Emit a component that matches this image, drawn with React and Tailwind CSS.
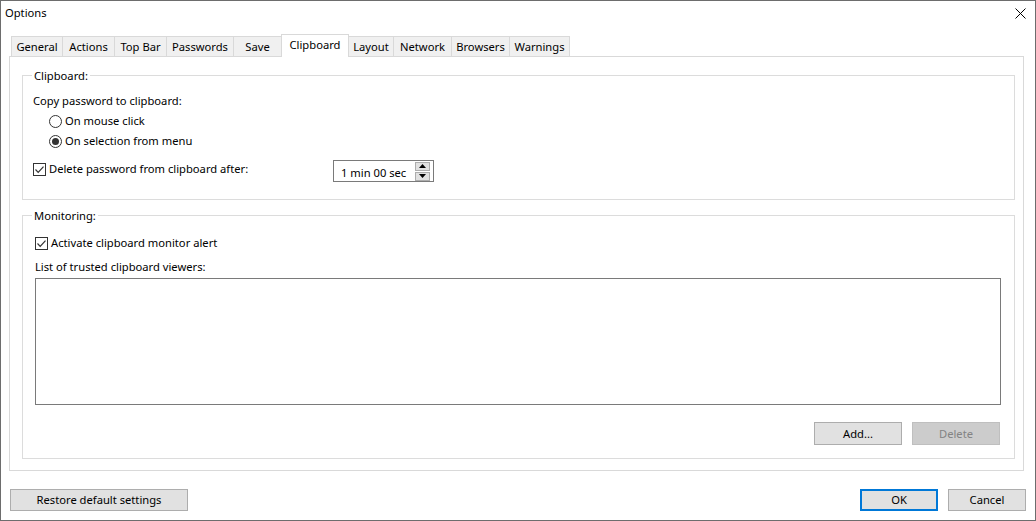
import React from 'react'

const tabs = [
  { label: 'General', w: 'w-[52px]' },
  { label: 'Actions', w: 'w-[53px]' },
  { label: 'Top Bar', w: 'w-[53px]' },
  { label: 'Passwords', w: 'w-[68px]' },
  { label: 'Save', w: 'w-[49px]' },
  { label: 'Clipboard', w: 'w-[68px]', active: true },
  { label: 'Layout', w: 'w-[46px]' },
  { label: 'Network', w: 'w-[59px]' },
  { label: 'Browsers', w: 'w-[59px]' },
  { label: 'Warnings', w: 'w-[61px]' },
]

const Radio = ({ checked, children }) => (
  <div className="flex h-[16px] items-center">
    <span className="flex h-[13px] w-[13px] items-center justify-center rounded-full border border-[#333333] bg-white">
      {checked && <span className="h-[7px] w-[7px] rounded-full bg-[#333333]" />}
    </span>
    <span className="ml-[3px]">{children}</span>
  </div>
)

const Check = ({ children }) => (
  <div className="flex h-[16px] items-center">
    <span className="flex h-[13px] w-[13px] items-center justify-center border border-[#333333] bg-white">
      <svg width="11" height="11" viewBox="0 0 11 11">
        <path d="M1.5 5.5 L4.2 8.3 L9.5 2.6" fill="none" stroke="#333333" strokeWidth="1.2" />
      </svg>
    </span>
    <span className="ml-[3px]">{children}</span>
  </div>
)

const Button = ({ w, children, primary, disabled }) => (
  <button
    className={`${w} flex items-center justify-center ${
      primary
        ? 'border-2 border-[#0078d7] bg-[#e1e1e1]'
        : disabled
        ? 'border border-[#bfbfbf] bg-[#cccccc] text-[#838383]'
        : 'border border-[#adadad] bg-[#e1e1e1]'
    }`}
  >
    {children}
  </button>
)

export default function App() {
  return (
    <div className="flex h-[521px] w-[1036px] flex-col border border-[#6d6d6d] bg-white font-['Noto_Sans',sans-serif] text-[11.2px] leading-[16px] text-black">
      {/* title bar */}
      <div className="flex h-[23px] items-center justify-between pl-[4px] pr-[9px]">
        <span>Options</span>
        <svg width="11" height="11" viewBox="0 0 11 11" className="mt-[1px]">
          <path d="M0.5 0.5 L10.5 10.5 M10.5 0.5 L0.5 10.5" stroke="#000" strokeWidth="1" />
        </svg>
      </div>

      <div className="mt-[10px] pl-[8px] pr-[11px]">
        {/* tabs */}
        <div className="flex h-[22px] items-end pl-[2px]">
          {tabs.map((t, i) => (
            <div
              key={t.label}
              className={`${t.w} ${i > 0 ? '-ml-px' : ''} flex justify-center border border-b-0 border-[#d9d9d9] ${
                t.active
                  ? 'relative z-10 -mb-px h-[23px] items-start bg-white pt-[2px]'
                  : 'h-[20px] items-center bg-[#f0f0f0] pt-[1px]'
              }`}
            >
              {t.label}
            </div>
          ))}
        </div>

        {/* tab page */}
        <div className="h-[415px] border border-[#d9d9d9] pl-[12px] pr-[8px] pt-[10px]">
          <fieldset className="border border-[#dcdcdc] px-0 pb-[17px]">
            <legend className="ml-[9px] px-[2px] pt-[2px] leading-[14px]">Clipboard:</legend>
            <div className="pl-[10px]">
              <div className="mt-[10px]">Copy password to clipboard:</div>
              <div className="mt-[4px] pl-[16px]">
                <Radio>On mouse click</Radio>
                <div className="mt-[4px]">
                  <Radio checked>On selection from menu</Radio>
                </div>
              </div>
              <div className="mt-[11px] flex items-start">
                <div className="w-[300px] pt-[1px]">
                  <Check>Delete password from clipboard after:</Check>
                </div>
                <div className="flex h-[22px] w-[101px] items-center justify-between border border-[#7a7a7a] pl-[7px] pr-[3px]">
                  <span className="mt-[3px]">1 min 00 sec</span>
                  <div className="flex flex-col gap-[1px]">
                    <div className="flex h-[9px] w-[15px] items-center justify-center border border-[#adadad] bg-[#e1e1e1]">
                      <svg width="7" height="4" viewBox="0 0 7 4"><path d="M0 4 L3.5 0 L7 4Z" fill="#000" /></svg>
                    </div>
                    <div className="flex h-[9px] w-[15px] items-center justify-center border border-[#adadad] bg-[#e1e1e1]">
                      <svg width="7" height="4" viewBox="0 0 7 4"><path d="M0 0 L3.5 4 L7 0Z" fill="#000" /></svg>
                    </div>
                  </div>
                </div>
              </div>
            </div>
          </fieldset>

          <fieldset className="mt-[7px] border border-[#dcdcdc] px-0 pb-[13px]">
            <legend className="ml-[9px] px-[2px] pt-[2px] leading-[14px]">Monitoring:</legend>
            <div className="pl-[12px] pr-[13px]">
              <div className="mt-[12px]">
                <Check>Activate clipboard monitor alert</Check>
              </div>
              <div className="mt-[8px]">List of trusted clipboard viewers:</div>
              <div className="mt-[3px] h-[127px] border border-[#7a7a7a] bg-white" />
              <div className="mt-[17px] flex justify-end gap-[10px] pr-[1px]">
                <div className="flex h-[23px]">
                  <Button w="w-[88px]">Add...</Button>
                </div>
                <div className="flex h-[23px]">
                  <Button w="w-[88px]" disabled>Delete</Button>
                </div>
              </div>
            </div>
          </fieldset>
        </div>
      </div>

      {/* bottom buttons */}
      <div className="mt-[18px] flex h-[22px] justify-between pl-[9px] pr-[9px]">
        <Button w="w-[178px]">Restore default settings</Button>
        <div className="flex gap-[10px]">
          <Button w="w-[78px]" primary>OK</Button>
          <Button w="w-[78px]">Cancel</Button>
        </div>
      </div>
    </div>
  )
}
